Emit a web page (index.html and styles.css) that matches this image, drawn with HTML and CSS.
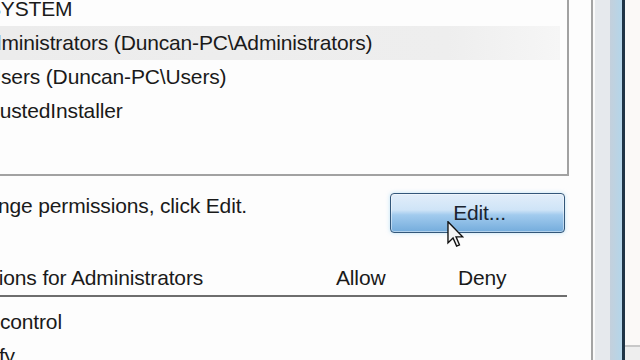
FILE: index.html
```html
<!DOCTYPE html>
<html>
<head>
<meta charset="utf-8">
<link rel="stylesheet" href="styles.css">
</head>
<body>
<div class="screen">
  <div class="dialog">
    <div class="listbox">
      <div class="list">
        <div class="item i-system">SYSTEM</div>
        <div class="item i-admin selected">Administrators (Duncan-PC\Administrators)</div>
        <div class="item i-users">Users (Duncan-PC\Users)</div>
        <div class="item i-trusted">TrustedInstaller</div>
      </div>
    </div>
    <div class="edit-row">
      <div class="hint">To change permissions, click Edit.</div>
      <div class="button">Edit...</div>
    </div>
    <div class="perm-header">
      <div class="col-name">Permissions for Administrators</div>
      <div class="col-allow">Allow</div>
      <div class="col-deny">Deny</div>
    </div>
    <div class="perm-rows">
      <div class="perm i-full">Full control</div>
      <div class="perm i-modify">Modify</div>
    </div>
    <svg class="cursor" width="17" height="26" viewBox="0 0 12 19">
      <path d="M0.5 0.5 L0.5 16 L4.2 12.4 L6.8 18.3 L8.9 17.4 L6.4 11.6 L11.2 11.6 Z" fill="#f4f4f4" stroke="#111" stroke-width="1" stroke-linejoin="miter"/>
    </svg>
  </div>
  <div class="frame">
    <div class="f-line"></div>
    <div class="f-gap"></div>
    <div class="f-gray"></div>
    <div class="f-blue"></div>
    <div class="f-dark"></div>
    <div class="f-outer"><div class="f-outer-fill"></div><div class="f-outer-bottom"></div></div>
  </div>
</div>
</body>
</html>
```

FILE: styles.css
```css
html, body {
  margin: 0;
  padding: 0;
  width: 640px;
  height: 360px;
  overflow: hidden;
  background: #fdfdfd;
}
.screen {
  display: flex;
  width: 640px;
  height: 360px;
  font-family: "Liberation Sans", Arial, sans-serif;
  font-size: 21px;
  letter-spacing: -0.15px;
  color: #1a1a1a;
}
.dialog {
  position: relative;
  width: 591px;
  height: 360px;
  overflow: hidden;
  background: #fdfdfd;
}
.listbox {
  width: 567px;
  height: 174px;
  border-right: 2px solid #a2a2a2;
  border-bottom: 2px solid #a2a2a2;
  overflow: hidden;
}
.list {
  margin-top: -8px;
}
.item {
  height: 34px;
  line-height: 34px;
  white-space: nowrap;
}
.i-system { text-indent: -13px; }
.i-admin { text-indent: -24px; }
.i-users { text-indent: -14px; }
.i-trusted { text-indent: -19px; }
.selected {
  width: 560px;
  background: linear-gradient(to right, #ececec 0%, #eeeeee 80%, #f6f6f6 100%);
}
.edit-row {
  display: flex;
  justify-content: space-between;
  align-items: flex-start;
  width: 569px;
  margin-top: 13px;
}
.hint {
  line-height: 34px;
  white-space: nowrap;
  text-indent: -63px;
}
.button {
  margin-top: 4px;
  margin-right: 4px;
  width: 169px;
  height: 38px;
  border: 1px solid #33577a;
  border-radius: 4px;
  background: linear-gradient(to bottom, #e2eefa 0%, #cfe4f7 42%, #a2cbee 55%, #74acdc 100%);
  box-shadow: 0 0 4px rgba(150, 210, 245, 0.6), inset 0 0 0 1px rgba(255,255,255,0.45);
  display: flex;
  align-items: center;
  justify-content: center;
  padding-left: 4px;
  box-sizing: content-box;
  color: #1a2430;
}
.perm-header {
  display: flex;
  width: 567px;
  margin-top: 28px;
  line-height: 34px;
  border-bottom: 2px solid #6e6e6e;
}
.col-name {
  width: 336px;
  white-space: nowrap;
  text-indent: -76px;
  overflow: hidden;
}
.col-allow { width: 122px; }
.col-deny { flex: 1; }
.perm-rows {
  padding-top: 8px;
}
.perm {
  height: 34px;
  line-height: 34px;
  white-space: nowrap;
}
.i-full { text-indent: -39px; }
.i-modify { text-indent: -46px; }
.cursor {
  position: absolute;
  left: 447px;
  top: 221px;
}
.frame {
  display: flex;
  width: 49px;
  height: 360px;
}
.f-line { width: 2px; background: #a4a4a4; }
.f-gap { width: 2px; background: #fafafa; }
.f-gray { width: 15px; background: #e6e9ed; }
.f-blue { width: 12px; background: linear-gradient(to right, #c4d0dc, #b4d6ea); }
.f-dark { width: 3px; background: #1e3446; }
.f-outer {
  flex: 1;
  display: flex;
  flex-direction: column;
  background: #fbf9f7;
}
.f-outer-fill { flex: 1; }
.f-outer-bottom {
  height: 13px;
  border-top: 2px solid #c8c8c8;
  background: #eeeeee;
}
```
